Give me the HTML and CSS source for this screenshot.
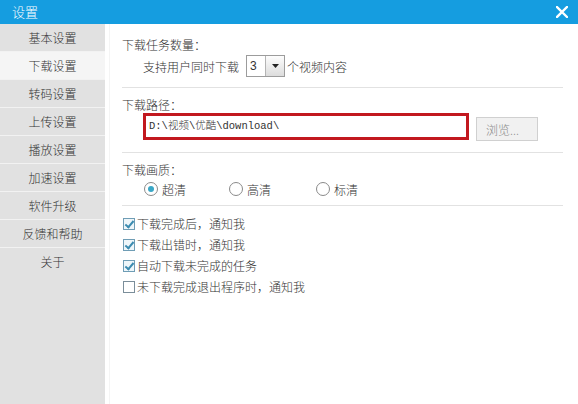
FILE: index.html
```html
<!DOCTYPE html>
<html lang="zh-CN">
<head>
  <meta charset="UTF-8" />
  <title>设置</title>
  <link rel="stylesheet" href="styles.css">
</head>
<body>
  <div class="window">
    <div class="titlebar">
      <span class="title">设置</span>
      <svg class="close" width="12" height="12" viewBox="0 0 12 12">
        <path d="M1 1 L11 11 M11 1 L1 11" stroke="#fff" stroke-width="2.4" stroke-linecap="square" fill="none"/>
      </svg>
    </div>
    <div class="main">
      <ul class="sidebar">
        <li>基本设置</li>
        <li class="active">下载设置</li>
        <li>转码设置</li>
        <li>上传设置</li>
        <li>播放设置</li>
        <li>加速设置</li>
        <li>软件升级</li>
        <li>反馈和帮助</li>
        <li>关于</li>
      </ul>

      <div class="content">
        <div class="section sec-count">
          <div class="label">下载任务数量：</div>
          <div class="row indent">
            <span>支持用户同时下载</span>
            <span class="select">
              <span class="select-value">3</span>
              <span class="select-btn">
                <svg width="7" height="4" viewBox="0 0 7 4"><path d="M0 0 H7 L3.5 4 Z" fill="#222"/></svg>
              </span>
            </span>
            <span>个视频内容</span>
          </div>
        </div>

        <div class="section sec-path">
          <div class="label">下载路径：</div>
          <div class="row indent path-row">
            <div class="path-input">D:\视频\优酷\download\</div>
            <button class="browse">浏览...</button>
          </div>
        </div>

        <div class="section sec-quality">
          <div class="label">下载画质：</div>
          <div class="row radios">
            <label class="radio checked"><span class="dot"></span>超清</label>
            <label class="radio"><span class="dot"></span>高清</label>
            <label class="radio"><span class="dot"></span>标清</label>
          </div>
        </div>

        <div class="section sec-notify">
          <label class="check checked"><span class="box"></span>下载完成后，通知我</label>
          <label class="check checked"><span class="box"></span>下载出错时，通知我</label>
          <label class="check checked"><span class="box"></span>自动下载未完成的任务</label>
          <label class="check"><span class="box"></span>未下载完成退出程序时，通知我</label>
        </div>
      </div>
    </div>
  </div>
</body>
</html>
```

FILE: styles.css
```css
/* Base */
* { box-sizing: border-box; margin: 0; padding: 0; }
body { font-family: "Noto Sans CJK SC", "Liberation Sans", sans-serif; font-size: 12px; font-weight: 300; color: #333; background: #fff; }
.window { width: 578px; height: 404px; display: flex; flex-direction: column; overflow: hidden; }

/* Title bar */
.titlebar { height: 24px; background: #159de0; color: #fff; display: flex; align-items: center; justify-content: space-between; padding: 0 10px 0 12px; flex-shrink: 0; }
.title { font-size: 13px; line-height: 24px; }
.close { display: block; }

/* Sidebar */
.main { flex: 1; display: flex; min-height: 0; }
.sidebar { width: 105px; background: #e1e1e1; list-style: none; flex-shrink: 0; }
.sidebar li { height: 28px; line-height: 27px; text-align: center; color: #333; border-bottom: 1px solid #f2f2f2; }
.sidebar li:last-child { border-bottom: none; }
.sidebar li.active { background: #f5f5f5; }

/* Content */
.content { flex: 1; padding: 0 15px 0 17px; box-shadow: inset 4px 0 0 #fff, inset 5px 0 0 #f4f4f4; }
.section { border-bottom: 1px solid #e2e2e2; }
.section:last-child { border-bottom: none; }
.label { line-height: 18px; }
.row { display: flex; align-items: center; }
.indent { padding-left: 21px; }

.sec-count { padding: 12px 0 10px; }
.sec-count .row { margin-top: 1px; height: 22px; }
.select { display: flex; height: 22px; width: 39px; border: 1px solid #9c9c9c; margin: 0 2px 0 7px; background: #fff; }
.select-value { width: 18px; padding-left: 3px; line-height: 20px; font-family: "Liberation Sans", sans-serif; font-size: 12px; }
.select-btn { flex: 1; border-left: 1px solid #b4b4b4; background: linear-gradient(#fdfdfd, #dcdcdc); display: flex; align-items: center; justify-content: center; }

.sec-path { padding: 9px 0 11px; }
.sec-path .label { line-height: 16px; }
.path-row { align-items: flex-start; }
.path-input { width: 326px; height: 27px; border: 3px solid #c2181f; padding-left: 3px; line-height: 21px; font-family: "Liberation Mono", "Noto Sans CJK SC", monospace; font-size: 10.5px; font-weight: 300; color: #333; }
.browse { margin: 4px 0 0 7px; width: 62px; height: 24px; border: 1px solid #d0d0d0; background: #f1f1f1; color: #8a8a8a; font-family: inherit; font-size: 12px; font-weight: 300; text-align: left; padding-left: 9px; }

.sec-quality { padding: 8px 0 6px; }
.radios { padding-left: 22px; height: 20px; }
.radio { display: flex; align-items: center; width: 85px; }
.radio:nth-child(2) { width: 87px; }
.radio .dot { width: 14px; height: 14px; border: 1px solid #8a8a8a; border-radius: 50%; background: #fff; margin-right: 4px; display: flex; align-items: center; justify-content: center; }
.radio.checked .dot::after { content: ""; width: 6px; height: 6px; border-radius: 50%; background: #3aa7c6; }

.sec-notify { padding-top: 7px; }
.check { display: flex; align-items: center; height: 21px; line-height: 21px; }
.check .box { width: 12px; height: 12px; border: 1px solid #7b8e9a; background: #fff; margin: 0 2px 0 1px; position: relative; }
.check.checked .box { border-color: #6f9db5; background: #eef6fa; }
.check.checked .box::after { content: ""; position: absolute; left: 3px; top: 0; width: 3px; height: 7px; border: solid #3b8bb0; border-width: 0 2px 2px 0; transform: rotate(40deg); }
```
